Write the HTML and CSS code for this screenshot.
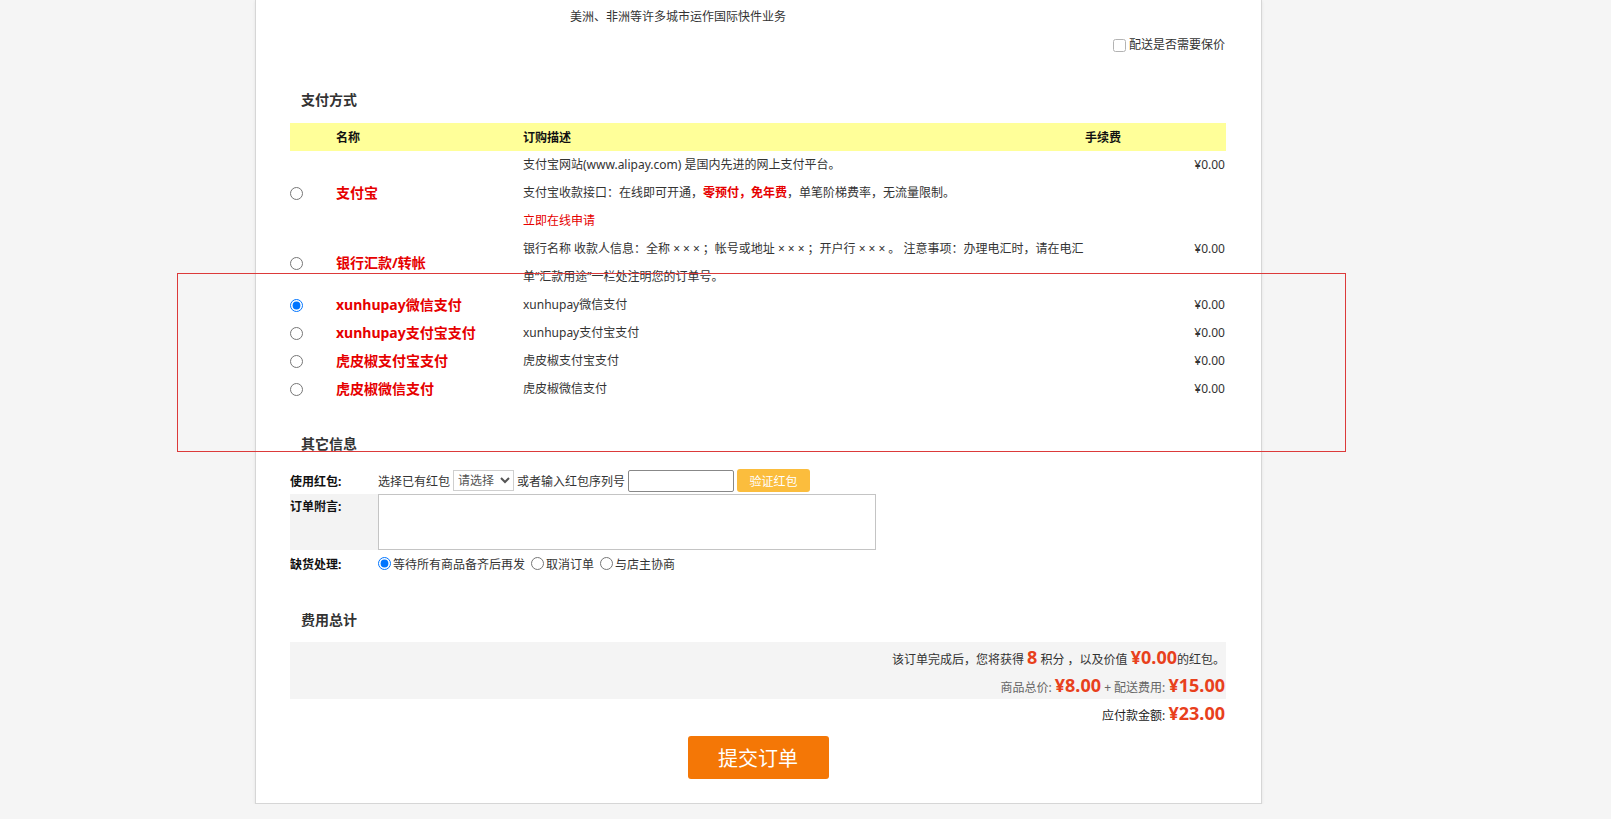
FILE: index.html
```html
<!DOCTYPE html>
<html lang="zh-CN">
<head>
<meta charset="utf-8">
<title>订单确认</title>
<link rel="stylesheet" href="styles.css">
</head>
<body>
<div class="page">
  <div class="ship-note">美洲、非洲等许多城市运作国际快件业务</div>
  <div class="insure"><label><input type="checkbox" class="chk">配送是否需要保价</label></div>

  <div class="sec-title sec-pay">支付方式</div>
  <table class="pay-table">
    <colgroup>
      <col class="c-radio"><col class="c-name"><col class="c-desc"><col class="c-fee">
    </colgroup>
    <thead>
      <tr><th></th><th>名称</th><th>订购描述</th><th>手续费</th></tr>
    </thead>
    <tbody>
      <tr>
        <td class="rc"><input type="radio" name="pay"></td>
        <td class="pname">支付宝</td>
        <td class="pdesc">
          <div class="dl">支付宝网站(www.alipay.com) 是国内先进的网上支付平台。</div>
          <div class="dl">支付宝收款接口：在线即可开通，<b class="hot">零预付，免年费</b>，单笔阶梯费率，无流量限制。</div>
          <div class="dl"><span class="link">立即在线申请</span></div>
        </td>
        <td class="fee">¥0.00</td>
      </tr>
      <tr>
        <td class="rc"><input type="radio" name="pay"></td>
        <td class="pname">银行汇款/转帐</td>
        <td class="pdesc">
          <div class="dl">银行名称 收款人信息：全称 <span class="xx">×××</span>；帐号或地址 <span class="xx">×××</span>；开户行 <span class="xx">×××</span>。 注意事项：办理电汇时，请在电汇</div>
          <div class="dl">单“汇款用途”一栏处注明您的订单号。</div>
        </td>
        <td class="fee">¥0.00</td>
      </tr>
      <tr>
        <td class="rc"><input type="radio" name="pay" checked></td>
        <td class="pname">xunhupay微信支付</td>
        <td class="pdesc">xunhupay微信支付</td>
        <td class="fee">¥0.00</td>
      </tr>
      <tr>
        <td class="rc"><input type="radio" name="pay"></td>
        <td class="pname">xunhupay支付宝支付</td>
        <td class="pdesc">xunhupay支付宝支付</td>
        <td class="fee">¥0.00</td>
      </tr>
      <tr>
        <td class="rc"><input type="radio" name="pay"></td>
        <td class="pname">虎皮椒支付宝支付</td>
        <td class="pdesc">虎皮椒支付宝支付</td>
        <td class="fee">¥0.00</td>
      </tr>
      <tr>
        <td class="rc"><input type="radio" name="pay"></td>
        <td class="pname">虎皮椒微信支付</td>
        <td class="pdesc">虎皮椒微信支付</td>
        <td class="fee">¥0.00</td>
      </tr>
    </tbody>
  </table>

  <div class="sec-title sec-other">其它信息</div>
  <div class="form">
    <div class="f-label f-row1">使用红包:</div>
    <div class="f-ctrl f-row1">
      <span>选择已有红包</span>
      <select class="sel"><option>请选择</option></select>
      <span>或者输入红包序列号</span>
      <input type="text" class="txt">
      <button type="button" class="btn-verify">验证红包</button>
    </div>
    <div class="f-label f-note">订单附言:</div>
    <div class="f-ctrl-note"><textarea class="note"></textarea></div>
    <div class="f-label f-row3">缺货处理:</div>
    <div class="f-ctrl f-row3">
      <label class="opt"><input type="radio" name="oos" checked>等待所有商品备齐后再发</label>
      <label class="opt"><input type="radio" name="oos">取消订单</label>
      <label class="opt"><input type="radio" name="oos">与店主协商</label>
    </div>
  </div>

  <div class="sec-title sec-total">费用总计</div>
  <div class="sum-box">
    <div class="sum-line">该订单完成后，您将获得 <b class="amt">8</b> 积分 ，以及价值 <b class="amt">¥0.00</b>的红包。</div>
    <div class="sum-line"><span class="muted">商品总价:</span> <b class="amt">¥8.00</b> <span class="muted">+ 配送费用:</span> <b class="amt">¥15.00</b></div>
  </div>
  <div class="sum-line total-line">应付款金额: <b class="amt">¥23.00</b></div>

  <div class="submit-wrap"><button type="button" class="btn-submit">提交订单</button></div>
</div>
<div class="highlight"></div>
</body>
</html>
```
FILE: styles.css
```css
* { box-sizing: border-box; }
html, body { margin: 0; padding: 0; }
body {
  background: #f5f5f5;
  font-family: "Noto Sans", "Noto Sans CJK SC", sans-serif;
  font-size: 12px;
  color: #333;
}
.page {
  width: 1007px;
  margin-left: 255px;
  background: #fff;
  border: 1px solid #d6d6d6;
  border-top: 0;
  box-shadow: 0 1px 3px rgba(0,0,0,0.08);
  padding: 0 35px 24px 34px;
}
.ship-note {
  padding-top: 7px;
  padding-left: 280px;
  line-height: 20px;
}
.insure {
  margin-top: 8px;
  line-height: 20px;
  text-align: right;
  padding-right: 1px;
}
.insure label { display: inline-flex; align-items: center; }
.chk { width: 13px; height: 13px; margin: 0 3px 0 0; opacity: 0.55; }
.sec-title {
  padding-left: 11px;
  line-height: 20px;
  font-size: 14px;
  font-weight: bold;
  color: #333;
}
.sec-pay { margin-top: 32px; }
.sec-other { margin-top: 31px; }
.sec-total { margin-top: 32px; }

.pay-table {
  margin-top: 13px;
  width: 936px;
  border-collapse: collapse;
  table-layout: fixed;
}
.c-radio { width: 46px; }
.c-name { width: 187px; }
.c-desc { width: 562px; }
.c-fee { width: 141px; }
.pay-table th {
  height: 28px;
  padding: 0;
  background: #ffff99;
  text-align: left;
  font-weight: bold;
  color: #111;
}
.pay-table td {
  padding: 0;
  line-height: 28px;
  vertical-align: middle;
}
.rc input { margin: 0; width: 13px; height: 13px; vertical-align: middle; }
.pname {
  font-size: 14px;
  font-weight: bold;
  color: #e60000;
}
.pdesc .dl { white-space: nowrap; }
.xx { letter-spacing: 3px; }
.hot { color: #e60000; }
.link { color: #e60000; }
.pay-table td.fee {
  vertical-align: top;
  text-align: right;
  padding-right: 1px;
}

.form {
  margin-top: 14px;
  display: grid;
  grid-template-columns: 88px 1fr;
}
.f-label {
  font-weight: bold;
  color: #111;
}
.f-row1 { height: 26px; display: flex; align-items: center; }
.f-ctrl { display: flex; align-items: center; gap: 3px; }
.sel {
  height: 21px;
  width: 61px;
  font-size: 12px;
  font-family: inherit;
  padding: 0;
  border: 1px solid #cfcfcf;
  color: #555;
  background: #fff;
}
.txt {
  width: 106px;
  height: 22px;
  margin: 0;
  border: 1px solid #888;
  border-radius: 2px;
}
.btn-verify {
  width: 73px;
  height: 23px;
  border: 0;
  border-radius: 3px;
  background: #fbbd3d;
  color: #fff;
  font-family: inherit;
  font-size: 12px;
  padding: 0;
}
.f-note {
  background: #f3f3f3;
  padding-top: 6px;
  line-height: 14px;
  height: 56px;
}
.f-ctrl-note { height: 56px; }
.note {
  display: block;
  width: 498px;
  height: 56px;
  margin: 0;
  border: 1px solid #c4c4c4;
  resize: none;
}
.f-row3 { height: 28px; display: flex; align-items: center; }
.opt { display: inline-flex; align-items: center; margin-right: 3px; }
.opt input { margin: 0 2px 0 0; width: 13px; height: 13px; }

.sum-box {
  margin-top: 12px;
  background: #f4f4f4;
  padding-top: 1px;
}
.sum-line {
  line-height: 28px;
  height: 28px;
  text-align: right;
  padding-right: 1px;
}
.amt {
  font-size: 18px;
  color: #e8401c;
}
.muted { color: #666; }
.total-line { color: #222; }
.submit-wrap {
  margin-top: 9px;
  text-align: center;
}
.btn-submit {
  width: 141px;
  height: 43px;
  border: 0;
  border-radius: 3px;
  background: #f47706;
  color: #fff;
  font-family: inherit;
  font-size: 20px;
  padding: 0;
  display: inline-block;
  vertical-align: top;
}
.highlight {
  position: absolute;
  left: 177px;
  top: 273px;
  width: 1169px;
  height: 179px;
  border: 1px solid #dc3a3a;
  pointer-events: none;
}
```
